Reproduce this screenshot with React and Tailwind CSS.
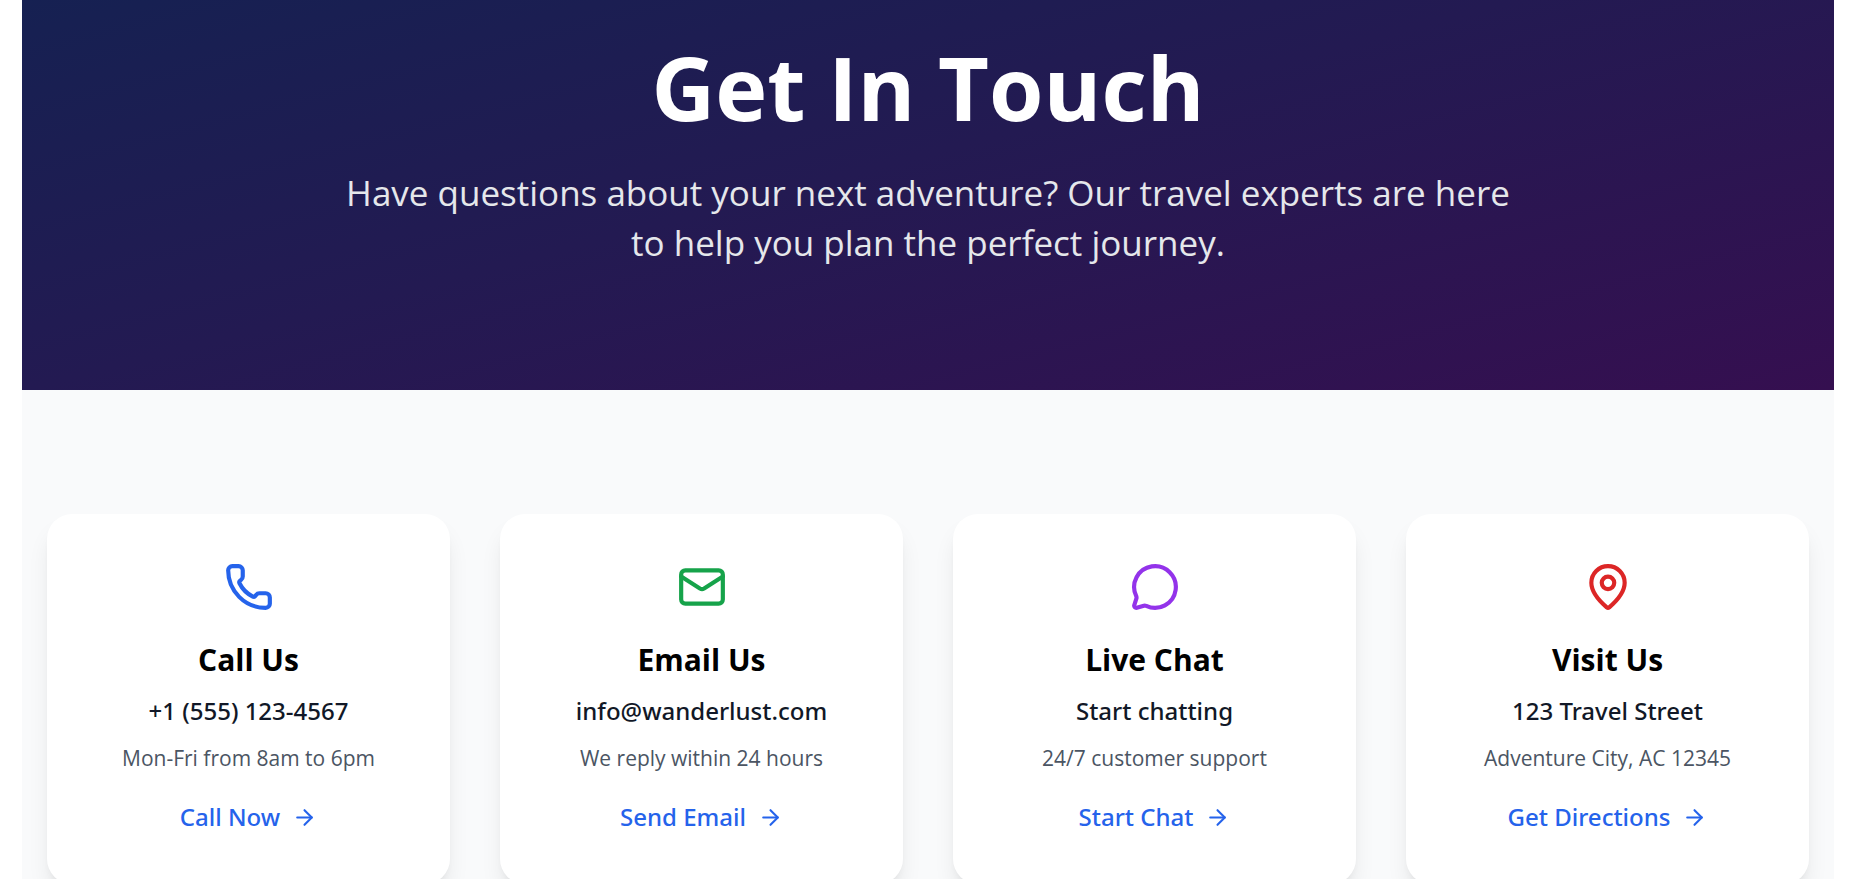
import { ArrowRight, Mail, MapPin, MessageCircle, Phone } from 'lucide-react'

const channels = [
  { Icon: Phone, tint: 'text-[#2563eb]', title: 'Call Us', value: '+1 (555) 123-4567', note: 'Mon-Fri from 8am to 6pm', action: 'Call Now', href: 'tel:+15551234567' },
  { Icon: Mail, tint: 'text-[#16a34a]', title: 'Email Us', value: 'info@wanderlust.com', note: 'We reply within 24 hours', action: 'Send Email', href: 'mailto:info@wanderlust.com' },
  { Icon: MessageCircle, tint: 'text-[#9333ea]', title: 'Live Chat', value: 'Start chatting', note: '24/7 customer support', action: 'Start Chat', href: '#chat' },
  { Icon: MapPin, tint: 'text-[#dc2626]', title: 'Visit Us', value: '123 Travel Street', note: 'Adventure City, AC 12345', action: 'Get Directions', href: '#directions' },
]

function ContactCard({ Icon, tint, title, value, note, action, href }) {
  return (
    <article className="flex flex-col items-center rounded-[25px] bg-white px-6 py-12 text-center shadow-[0_16px_24px_-5px_rgba(0,0,0,0.1),0_6px_10px_-6px_rgba(0,0,0,0.1)]">
      <Icon className={`size-[50px] ${tint}`} aria-hidden="true" />
      <h2 className="mt-6 text-[30px] leading-[48px] font-bold text-black">{title}</h2>
      <p className="mt-2 font-['Noto_Sans','Open_Sans',sans-serif] text-[24px] leading-[38px] font-medium text-[#111827]">{value}</p>
      <p className="mt-3 text-[21px] leading-[32px] text-[#4b5563]">{note}</p>
      <a href={href} className="mt-6 inline-flex items-center gap-3 font-['Noto_Sans','Open_Sans',sans-serif] text-[24px] leading-[38px] font-medium text-[#2563eb]">
        {action}
        <ArrowRight className="size-[25px]" aria-hidden="true" />
      </a>
    </article>
  )
}

export default function App() {
  return (
    <div className="h-screen overflow-hidden bg-white pr-[15px] pl-[22px] font-['Open_Sans','Noto_Sans',sans-serif]">
      <header className="bg-[linear-gradient(to_bottom_right,#132252,#231a52,#350f50)] bg-[length:100%_473px] bg-bottom px-6 pt-10 pb-[122px] text-center">
        <h1 className="text-[88px] leading-[94px] font-bold text-white">Get In Touch</h1>
        <p className="mx-auto mt-[34px] max-w-[1200px] text-[35px] leading-[50px] text-gray-200">
          Have questions about your next adventure? Our travel experts are here to help you plan the perfect journey.
        </p>
      </header>
      <main className="grid grid-cols-4 gap-[50px] bg-[#f9fafb] px-[25px] py-[124px]">
        {channels.map((channel) => (
          <ContactCard key={channel.title} {...channel} />
        ))}
      </main>
    </div>
  )
}
